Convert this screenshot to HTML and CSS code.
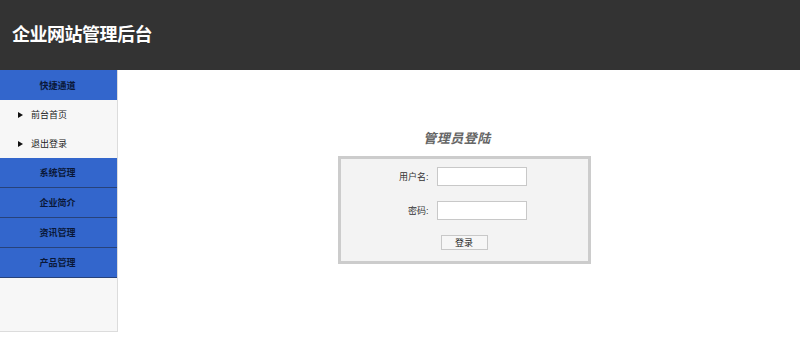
FILE: index.html
```html
<!DOCTYPE html>
<html lang="zh">
<head>
<meta charset="utf-8">
<title>企业网站管理后台</title>
<link rel="stylesheet" href="styles.css">
</head>
<body>
<header class="top">
  <h1 class="logo">企业网站管理后台</h1>
</header>
<div class="wrap">
  <aside class="side">
    <div class="menu-head">快捷通道</div>
    <ul class="sub">
      <li><span class="tri"></span>前台首页</li>
      <li><span class="tri"></span>退出登录</li>
    </ul>
    <div class="menu-head">系统管理</div>
    <div class="menu-head">企业简介</div>
    <div class="menu-head">资讯管理</div>
    <div class="menu-head">产品管理</div>
  </aside>
  <main class="main">
    <h2 class="login-title">管理员登陆</h2>
    <form class="login-box">
      <div class="row"><label class="lbl">用户名:</label><input class="ipt" type="text"></div>
      <div class="row"><label class="lbl">密码:</label><input class="ipt" type="password"></div>
      <div class="row btn-row"><button class="btn" type="button">登录</button></div>
    </form>
  </main>
</div>
</body>
</html>
```
FILE: styles.css
```css
* { box-sizing: border-box; }
body {
  margin: 0;
  background: #fff;
  font-family: "Liberation Sans", "Noto Sans CJK SC", sans-serif;
  color: #222;
}
.top {
  height: 70px;
  background: #333333;
  display: flex;
  align-items: center;
  padding-left: 12px;
}
.logo {
  margin: 0;
  color: #fff;
  font-size: 18px;
  font-weight: bold;
  letter-spacing: -0.5px;
  padding-bottom: 4px;
}
.wrap {
  display: flex;
}
.side {
  width: 118px;
  height: 262px;
  background: #f7f7f7;
  border-right: 1px solid #dcdcdc;
  border-bottom: 1px solid #dcdcdc;
}
.menu-head {
  height: 30px;
  background: #3366cc;
  border-bottom: 1px solid #27427a;
  color: #0a1838;
  font-size: 9px;
  font-weight: bold;
  display: flex;
  align-items: center;
  justify-content: center;
  padding-right: 2px;
}
.menu-head:first-child { border-bottom: none; height: 30px; }
.sub {
  list-style: none;
  margin: 0;
  padding: 0;
}
.sub li {
  height: 29px;
  display: flex;
  align-items: center;
  padding-left: 18px;
  font-size: 9px;
  color: #222;
}
.tri {
  width: 0;
  height: 0;
  border-top: 3.5px solid transparent;
  border-bottom: 3.5px solid transparent;
  border-left: 5px solid #111;
  margin-right: 8px;
}
.main {
  flex: 1;
  display: flex;
  flex-direction: column;
  align-items: center;
  padding-top: 58px;
  padding-left: 10px;
}
.login-title {
  margin: 0 14px 9px 0;
  font-size: 13px;
  font-style: italic;
  font-weight: bold;
  color: #666;
  letter-spacing: 0.5px;
}
.login-box {
  width: 253px;
  height: 108px;
  background: #f3f3f3;
  border: 3px solid #cccccc;
  margin: 0;
  padding-top: 8px;
}
.row {
  display: flex;
  align-items: center;
  height: 19px;
  margin-bottom: 15px;
}
.lbl {
  width: 93px;
  text-align: right;
  font-size: 9px;
  color: #333;
  padding-right: 5px;
}
.ipt {
  width: 90px;
  height: 19px;
  border: 1px solid #c8c8c8;
  background: #fff;
  margin: 0 0 0 3px;
  padding: 0;
}
.btn-row {
  justify-content: center;
  height: 15px;
  margin-top: 0;
  padding-left: 46px;
}
.btn {
  width: 47px;
  height: 15px;
  border: 1px solid #c8c8c8;
  background: #f6f6f6;
  font-size: 9px;
  color: #222;
  padding: 0;
  font-family: inherit;
  margin-left: -46px;
}
```
